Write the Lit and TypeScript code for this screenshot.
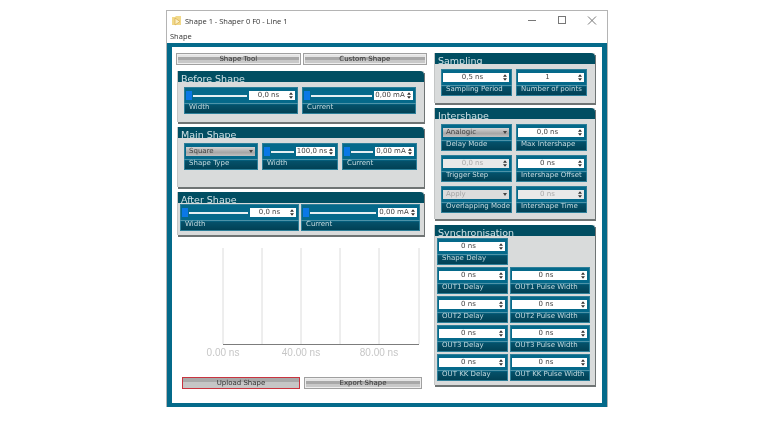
import { LitElement, html, css, svg } from 'lit'
import { customElement } from 'lit/decorators.js'

const spin = html`<svg class="spin" viewBox="0 0 5 8"><path d="M2.5 0 5 3H0zM2.5 8 0 5h5z" /></svg>`
const caret = html`<svg class="caret" viewBox="0 0 4 3"><path d="M0 0h4L2 3z" /></svg>`

@customElement('app-root')
export class AppRoot extends LitElement {
  static styles = css`
    :host {
      display: block;
      height: 421px;
      padding: 10px 0 0 166px;
      box-sizing: border-box;
      background: #fff;
      font-family: 'DejaVu Sans', sans-serif;
    }

    .win {
      width: 442px;
      height: 397px;
      box-sizing: border-box;
      border: 1px solid #b4b4b4;
      border-bottom: 0;
      display: flex;
      flex-direction: column;
      background: #fff;
      filter: blur(0.45px);
    }

    .titlebar {
      height: 21px;
      box-sizing: border-box;
      padding: 0 0 2px 5px;
      display: flex;
      align-items: center;
      gap: 3px;
      font: 7.5px 'Open Sans', sans-serif;
      color: #333;
    }

    .titlebar .app {
      width: 10px;
      height: 11px;
    }

    .titlebar .name {
      flex: 1;
    }

    .ctl {
      width: 30px;
      height: 11px;
      display: block;
    }

    .controls {
      display: flex;
    }

    .menu {
      height: 11px;
      padding-left: 3px;
      font: 7.5px/9px 'Open Sans', sans-serif;
      color: #333;
    }

    .frame {
      flex: 1;
      background: #046a8a;
      padding: 4px 5px;
      display: flex;
    }

    .content {
      flex: 1;
      background: #fff;
      display: grid;
      grid-template-columns: 258px 1fr;
    }

    .left {
      padding: 6px 0 0 5px;
      display: flex;
      flex-direction: column;
    }

    .right {
      padding: 6px 0 0 4px;
      display: flex;
      flex-direction: column;
    }

    .btns {
      display: flex;
      gap: 2px;
      margin-left: -1px;
      width: 251px;
    }

    .btn {
      flex: 1;
      height: 12px;
      box-sizing: border-box;
      border: 1px solid #a0a0a0;
      outline: 1px solid #eee;
      outline-offset: -2px;
      background: linear-gradient(#e4e4e4 0 30%, #a8a8a8 30% 60%, #c8c8c8 60%);
      font-size: 7px;
      line-height: 10px;
      text-align: center;
      color: #333;
    }

    .btn.hot {
      border-color: #c8343f;
      outline: 0;
      background: linear-gradient(#a8a8a8 0 40%, #c6c6c6 40%);
    }

    .btns.bottom {
      margin-left: 5px;
      width: 240px;
      gap: 4px;
    }

    .panel {
      width: 247px;
      box-sizing: border-box;
      background: #d9dbdb;
      box-shadow: 1px 2px 0 #6f7474;
      margin-bottom: 5px;
      border-left: 1px solid #c4c6c6;
    }

    .right .panel {
      width: 161px;
    }

    .head {
      height: 11px;
      overflow: hidden;
      background: #014e62;
      color: #d0e2e6;
      font-size: 9.5px;
      line-height: 15px;
      padding-left: 3px;
      border-radius: 0 4px 0 0;
    }

    .body {
      padding: 5px 6px 8px;
      display: grid;
      gap: 4px;
    }

    .two {
      grid-template-columns: 114px 114px;
      gap: 4px;
    }

    .three {
      grid-template-columns: 74px 76px 75px;
      gap: 4px;
      padding-bottom: 17px;
    }

    .after {
      grid-template-columns: 119px 119px;
      gap: 2px;
      padding: 1px 3px 4px 2px;
    }

    .cols {
      grid-template-columns: 71px 71px;
      gap: 4px;
      padding-bottom: 6px;
    }

    .cols.single {
      padding-bottom: 7px;
    }

    .sync {
      grid-template-columns: 71px 80px;
      gap: 2px;
      padding: 2px 2px 4px 2px;
    }

    .spaced {
      margin-top: 1px;
    }

    .tile {
      height: 27px;
      display: flex;
      flex-direction: column;
      background: linear-gradient(#05698a 0 17px, #05516a 18px, #013f52);
      box-shadow: inset 0 0 0 1px #2d7f99;
      color: #c5dbe0;
    }

    .ctrl {
      height: 17px;
      box-sizing: border-box;
      padding: 4px 3px 0 2px;
      display: flex;
      align-items: flex-start;
      border-bottom: 1px solid #4d93a8;
    }

    .label {
      font-size: 7px;
      line-height: 8px;
      padding-left: 5px;
      margin-top: -1px;
      white-space: nowrap;
    }

    .slider {
      flex: 1;
      height: 9px;
      display: flex;
      align-items: center;
      gap: 1px;
      margin-right: 2px;
    }

    .thumb {
      width: 6px;
      height: 9px;
      background: #0a78e6;
      flex: none;
    }

    .track {
      flex: 1;
      height: 2px;
      background: #e6eff2;
    }

    .input {
      width: 46px;
      height: 9px;
      flex: none;
      background: #fff;
      color: #444;
      font-size: 7px;
      line-height: 9px;
      display: flex;
      align-items: center;
      overflow: hidden;
    }

    .input.full {
      flex: 1;
      width: auto;
    }

    .input.narrow {
      width: 39px;
    }

    .input.off {
      background: #e9e9e9;
      color: #aaa;
    }

    .val {
      flex: 1;
      text-align: center;
      white-space: nowrap;
      overflow: hidden;
    }

    .spin {
      width: 4px;
      height: 7px;
      margin: 0 2px 0 1px;
      fill: #333;
      flex: none;
    }

    .select {
      flex: 1;
      height: 9px;
      background: linear-gradient(#d4d4d4, #a6a6a6 60%, #c0c0c0);
      color: #444;
      font-size: 7px;
      line-height: 9px;
      padding-left: 3px;
      display: flex;
      align-items: center;
      justify-content: space-between;
    }

    .select.off {
      background: #dcdcdc;
      color: #a4a4a4;
    }

    .caret {
      width: 4px;
      height: 3px;
      margin-right: 2px;
      fill: #444;
    }

    .chart {
      display: block;
      width: 253px;
      height: 142px;
      margin-top: -5px;
    }
  `

  private slide(label: string, value: string, narrow = false) {
    return html`<div class="tile">
      <div class="ctrl">
        <div class="slider"><span class="thumb"></span><span class="track"></span></div>
        <div class="input ${narrow ? 'narrow' : ''}"><span class="val">${value}</span>${spin}</div>
      </div>
      <div class="label">${label}</div>
    </div>`
  }

  private num(label: string, value: string, off = false) {
    return html`<div class="tile">
      <div class="ctrl">
        <div class="input full ${off ? 'off' : ''}"><span class="val">${value}</span>${spin}</div>
      </div>
      <div class="label">${label}</div>
    </div>`
  }

  private pick(label: string, value: string, off = false) {
    return html`<div class="tile">
      <div class="ctrl">
        <div class="select ${off ? 'off' : ''}"><span>${value}</span>${caret}</div>
      </div>
      <div class="label">${label}</div>
    </div>`
  }

  private chart() {
    const xs = [46, 85, 124, 163, 202, 242]
    const ticks = [
      [46, '0.00 ns'],
      [124, '40.00 ns'],
      [202, '80.00 ns'],
    ] as const
    return html`<svg class="chart" viewBox="0 0 253 142">
      ${xs.map((x) => svg`<line x1=${x} x2=${x} y1="13" y2="109" stroke="#dcdcdc" />`)}
      <line x1="46" x2="242" y1="109.5" y2="109.5" stroke="#7c7c7c" />
      ${ticks.map(
        ([x, t]) =>
          svg`<text x=${x} y="121" text-anchor="middle" fill="#c6c6c6" font-size="10" font-family="Liberation Sans">${t}</text>`,
      )}
    </svg>`
  }

  render() {
    const outs = ['OUT1', 'OUT2', 'OUT3', 'OUT KK']
    return html`<div class="win">
      <div class="titlebar">
        <svg class="app" viewBox="0 0 10 11">
          <path d="M0 2h3l1-1h5v9H0z" fill="#f1d98a" />
          <path d="M3 3l5 3.5L3 10z" fill="#fbf0c4" stroke="#d9a94a" stroke-width=".7" />
        </svg>
        <span class="name">Shape 1 - Shaper 0 F0 - Line 1</span>
        <div class="controls">
          <svg class="ctl" viewBox="0 0 30 11"><path d="M11 5.5h8" stroke="#777" /></svg>
          <svg class="ctl" viewBox="0 0 30 11"><rect x="11.5" y="1.5" width="7" height="7" fill="none" stroke="#777" /></svg>
          <svg class="ctl" viewBox="0 0 30 11"><path d="M11 1.5l8 8M19 1.5l-8 8" stroke="#777" /></svg>
        </div>
      </div>
      <div class="menu">Shape</div>
      <div class="frame">
        <div class="content">
          <div class="left">
            <div class="btns" style="margin-bottom:6px">
              <div class="btn">Shape Tool</div>
              <div class="btn">Custom Shape</div>
            </div>
            <div class="panel">
              <div class="head">Before Shape</div>
              <div class="body two">${this.slide('Width', '0,0 ns')}${this.slide('Current', '0,00 mA', true)}</div>
            </div>
            <div class="panel">
              <div class="head">Main Shape</div>
              <div class="body three">
                ${this.pick('Shape Type', 'Square')}${this.slide('Width', '100,0 ns', true)}${this.slide('Current', '0,00 mA', true)}
              </div>
            </div>
            <div class="panel">
              <div class="head">After Shape</div>
              <div class="body after">${this.slide('Width', '0,0 ns')}${this.slide('Current', '0,00 mA', true)}</div>
            </div>
            ${this.chart()}
            <div class="btns bottom">
              <div class="btn hot">Upload Shape</div>
              <div class="btn">Export Shape</div>
            </div>
          </div>
          <div class="right">
            <div class="panel">
              <div class="head">Sampling</div>
              <div class="body cols single">${this.num('Sampling Period', '0,5 ns')}${this.num('Number of points', '1')}</div>
            </div>
            <div class="panel">
              <div class="head">Intershape</div>
              <div class="body cols">
                ${this.pick('Delay Mode', 'Analogic')}${this.num('Max Intershape', '0,0 ns')}
                ${this.num('Trigger Step', '0,0 ns', true)}${this.num('Intershape Offset', '0 ns')}
                ${this.pick('Overlapping Mode', 'Apply', true)}${this.num('Intershape Time', '0 ns', true)}
              </div>
            </div>
            <div class="panel spaced">
              <div class="head">Synchronisation</div>
              <div class="body sync">
                ${this.num('Shape Delay', '0 ns')}<span></span>
                ${outs.map((o) => html`${this.num(`${o} Delay`, '0 ns')}${this.num(`${o} Pulse Width`, '0 ns')}`)}
              </div>
            </div>
          </div>
        </div>
      </div>
    </div>`
  }
}
